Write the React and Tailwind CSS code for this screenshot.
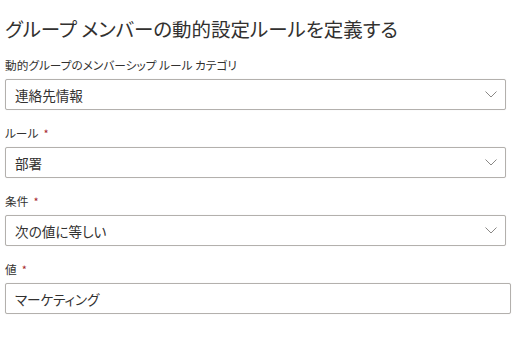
const fields = [
  { label: "動的グループのメンバーシップ ルール カテゴリ", value: "連絡先情報", required: false, select: true },
  { label: "ルール", value: "部署", required: true, select: true },
  { label: "条件", value: "次の値に等しい", required: true, select: true },
  { label: "値", value: "マーケティング", required: true, select: false },
];

function Chevron() {
  return (
    <svg width="12" height="7" viewBox="0 0 12 7" fill="none" className="shrink-0">
      <path d="M0.5 0.5L6 6L11.5 0.5" stroke="#8a8886" strokeWidth="1" />
    </svg>
  );
}

function Field({ label, value, required, select }) {
  return (
    <div className={select ? "w-[501px]" : "w-[506px]"}>
      <div className="h-[18px] leading-[18px] text-[11.7px] text-[#323130]">
        {label}
        {required && <span className="ml-[5px] text-[11px] text-[#a4262c]">*</span>}
      </div>
      <div className="mt-[5px] h-[31px] flex items-center justify-between rounded-[2px] border border-[#b3b0ad] bg-white pl-[9px] pr-[8px] shadow-[0_0_1px_rgba(0,0,0,0.15)]">
        <span className="text-[13.6px] leading-[20px] text-[#323130]">{value}</span>
        {select && <Chevron />}
      </div>
    </div>
  );
}

export default function App() {
  return (
    <div className="w-[528px] h-[343px] bg-white pl-[5px] pt-[14px] font-['Noto_Sans_CJK_JP','Noto_Sans',sans-serif] [font-feature-settings:'palt']">
      <h1 className="h-[30px] leading-[30px] text-[19.5px] font-normal text-[#323130]">
        グループ メンバーの動的設定ルールを定義する
      </h1>
      <div className="mt-[12px] flex flex-col gap-[14px]">
        {fields.map((f) => (
          <Field key={f.label} {...f} />
        ))}
      </div>
    </div>
  );
}
